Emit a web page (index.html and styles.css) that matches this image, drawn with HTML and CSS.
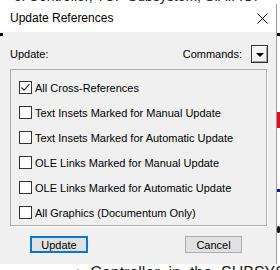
FILE: index.html
```html
<!DOCTYPE html>
<html lang="en">
<head>
    <meta charset="UTF-8">
    <title>Update References</title>
    <link rel="stylesheet" href="styles.css">
</head>
<body>
    <!-- bits of the document behind the dialog -->
    <div class="doc-text doc-top">ol Controller, TCP Subsystem, S.A.P.O.</div>
    <div class="doc-text doc-bottom">▲ Controller  in  the  SUBSYS</div>
    <div class="doc-mark mark-left-1"></div>
    <div class="doc-mark mark-right-1"></div>
    <div class="doc-mark mark-red"></div>
    <div class="doc-mark mark-blue"></div>
    <div class="doc-mark mark-black"></div>

    <div class="dialog">
        <div class="titlebar">
            <span class="title">Update References</span>
            <svg class="close" width="11" height="11" viewBox="0 0 11 11">
                <path d="M0.5 0.5 L10.5 10.5 M10.5 0.5 L0.5 10.5" stroke="#000" stroke-width="1" fill="none"/>
            </svg>
        </div>

        <div class="dialog-body">
            <div class="toolbar">
                <span>Update:</span>
                <div class="commands">
                    <span>Commands:</span>
                    <span class="dropdown"><span class="arrow"></span></span>
                </div>
            </div>

            <div class="groupbox">
                <div class="check-row">
                    <span class="checkbox">
                        <svg width="11" height="11" viewBox="0 0 11 11">
                            <path d="M1.5 5.5 L4 8.2 L9.5 2.2" stroke="#333" stroke-width="1.2" fill="none"/>
                        </svg>
                    </span>
                    All Cross-References
                </div>
                <div class="check-row"><span class="checkbox"></span>Text Insets Marked for Manual Update</div>
                <div class="check-row"><span class="checkbox"></span>Text Insets Marked for Automatic Update</div>
                <div class="check-row"><span class="checkbox"></span>OLE Links Marked for Manual Update</div>
                <div class="check-row"><span class="checkbox"></span>OLE Links Marked for Automatic Update</div>
                <div class="check-row"><span class="checkbox"></span>All Graphics (Documentum Only)</div>
            </div>

            <div class="buttons">
                <button class="btn btn-default">Update</button>
                <button class="btn">Cancel</button>
            </div>
        </div>
    </div>
</body>
</html>
```

FILE: styles.css
```css
/* Page */
body {
    margin: 0;
    width: 280px;
    height: 270px;
    overflow: hidden;
    position: relative;
    background-color: #fff;
    font-family: "Liberation Sans", Arial, sans-serif;
    font-size: 11px;
    color: #000;
}

/* Document behind the dialog */
.doc-text {
    position: absolute;
    white-space: pre;
    color: #222;
}

.doc-top {
    top: -12px;
    left: 14px;
    font-size: 14px;
}

.doc-bottom {
    top: 264px;
    left: 70px;
    font-size: 16px;
}

.doc-mark {
    position: absolute;
    width: 3px;
}

.mark-left-1 {
    left: 0;
    top: 33px;
    height: 3px;
    background-color: #000;
}

.mark-right-1 {
    left: 277px;
    top: 33px;
    height: 3px;
    background-color: #000;
}

.mark-red {
    left: 277px;
    top: 112px;
    height: 16px;
    background-color: #d11;
}

.mark-blue {
    left: 277px;
    top: 189px;
    height: 3px;
    background-color: #1010c0;
}

.mark-black {
    left: 277px;
    top: 226px;
    height: 7px;
    background-color: #111;
    border-radius: 2px;
}

/* Dialog window */
.dialog {
    margin-top: 4px;
    width: 276px;
    border-right: 1px solid #9a9a9a;
}

.titlebar {
    height: 28px;
    background-color: #fff;
    display: flex;
    align-items: center;
    justify-content: space-between;
    padding: 0 8px 0 10px;
    font-size: 12px;
}

.dialog-body {
    height: 232px;
    box-sizing: border-box;
    background-color: #f0f0f0;
    padding: 13px 8px 0 10px;
}

/* Top row */
.toolbar {
    height: 18px;
    display: flex;
    align-items: center;
    justify-content: space-between;
}

.commands {
    display: flex;
    align-items: center;
    gap: 9px;
}

.dropdown {
    width: 15px;
    height: 16px;
    border: 1px solid #333;
    background-color: #f4f4f4;
    box-shadow: inset 1px 1px 0 #fff, inset -1px -1px 0 #a0a0a0;
    display: flex;
    align-items: center;
    justify-content: center;
}

.arrow {
    width: 0;
    height: 0;
    border-left: 4px solid transparent;
    border-right: 4px solid transparent;
    border-top: 4px solid #000;
    margin-top: 1px;
}

/* Group of checkboxes */
.groupbox {
    margin-top: 6px;
    width: 257px;
    box-sizing: border-box;
    border: 1px solid #adadad;
    box-shadow: 1px 1px 0 #fff;
    padding: 5px 0 0 8px;
    height: 157px;
}

.check-row {
    height: 25px;
    display: flex;
    align-items: center;
    gap: 3px;
}

.checkbox {
    width: 13px;
    height: 13px;
    box-sizing: border-box;
    border: 1px solid #333;
    background-color: #fff;
    display: flex;
    align-items: center;
    justify-content: center;
}

/* Buttons */
.buttons {
    margin-top: 10px;
    padding-left: 20px;
    display: flex;
    gap: 97px;
}

.btn {
    width: 57px;
    height: 17px;
    padding: 0;
    font-family: inherit;
    font-size: 11px;
    color: #000;
    background-color: #e1e1e1;
    border: 1px solid #adadad;
    border-radius: 0;
}

.btn-default {
    width: 58px;
    border: 2px solid #0078d7;
}
```
